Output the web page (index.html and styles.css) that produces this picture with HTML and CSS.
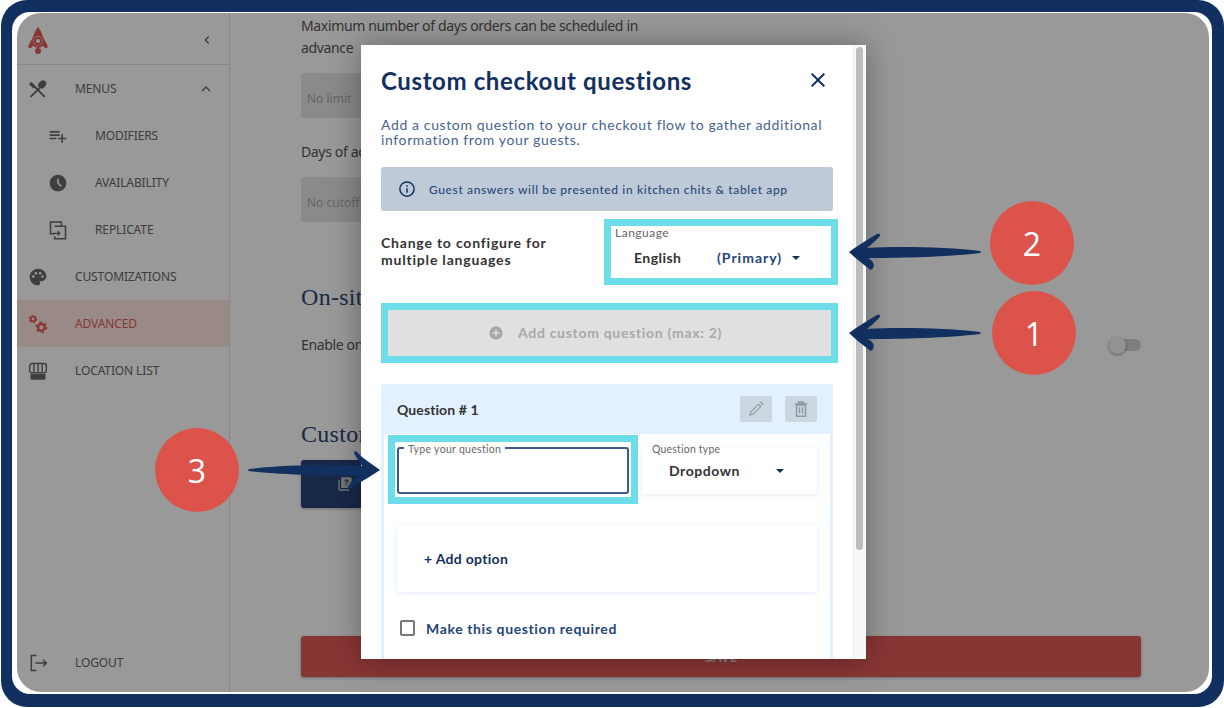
FILE: index.html
```html
<!DOCTYPE html>
<html lang="en">
<head>
<meta charset="utf-8">
<title>Custom checkout questions</title>
<link rel="stylesheet" href="styles.css">
</head>
<body>
<div class="frame">
  <div class="matte">
    <div class="screen">
      <aside class="sidebar">
        <div class="brand">
          <svg class="logo" viewBox="0 0 20 27"><path fill="#e35b58" fill-rule="evenodd" d="M10 0 C12.500 3 14 6.500 15 10 L19.500 18.500 C20.500 21 18 22 16.500 20.500 L14.800 18.800 A6.500 6.500 0 0 1 5.200 18.800 L3.500 20.500 C2 22 -.5 21 .5 18.500 L5 10 C6 6.500 7.500 3 10 0 Z M10 9.300 A4.700 4.700 0 1 0 10 18.700 A4.700 4.700 0 1 0 10 9.300 Z"/><path fill="#e35b58" fill-rule="evenodd" d="M10 9.800 A4.200 4.200 0 1 0 10 18.200 A4.200 4.200 0 1 0 10 9.800 Z M10 12 A2 2 0 1 1 10 16 A2 2 0 1 1 10 12 Z"/><circle cx="10" cy="24" r="3" fill="#e35b58"/></svg>
          <svg class="chev" viewBox="0 0 24 24"><path d="M15.410 7.410L14 6l-6 6 6 6 1.410-1.410L10.830 12z"/></svg>
        </div>
        <nav class="nav">
          <a class="row"><svg class="ico" viewBox="0 0 24 24"><path d="M3.500 4.500L20 21.500" stroke="#666" stroke-width="2.200" fill="none"/><path d="M2.500 3.500l6 6-2 2-5-5z"/><path d="M3 21.500L14 11" stroke="#666" stroke-width="2.200"/><ellipse cx="17" cy="6.500" rx="4.200" ry="5.400" transform="rotate(45 17 6.500)"/></svg><span>MENUS</span><svg class="up" viewBox="0 0 24 24"><path d="M12 8l-6 6 1.410 1.410L12 10.830l4.590 4.580L18 14z"/></svg></a>
          <a class="row sub"><svg class="ico" viewBox="0 0 24 24"><path d="M14 10H2v2h12v-2zm0-4H2v2h12V6zm4 8v-4h-2v4h-4v2h4v4h2v-4h4v-2h-4zM2 16h8v-2H2v2z"/></svg><span>MODIFIERS</span></a>
          <a class="row sub"><svg class="ico" viewBox="0 0 24 24"><path d="M11.990 2C6.470 2 2 6.480 2 12s4.470 10 9.990 10C17.520 22 22 17.520 22 12S17.520 2 11.990 2zm3.300 14.710L11 12.410V7h2v4.590l3.710 3.710-1.420 1.410z"/></svg><span>AVAILABILITY</span></a>
          <a class="row sub"><svg class="ico" viewBox="0 0 24 24"><path fill="none" stroke="#666" stroke-width="1.800" d="M8 16.500H3V2.500h13V7M8 7.500h13v15H8v-3"/><path fill="none" stroke="#666" stroke-width="1.600" d="M6 16h8M11.500 13.500l2.500 2.500-2.500 2.500"/></svg><span>REPLICATE</span></a>
          <a class="row"><svg class="ico" viewBox="0 0 24 24"><path d="M12 2C6.490 2 2 6.490 2 12s4.490 10 10 10c1.380 0 2.500-1.120 2.500-2.500 0-.61-.23-1.200-.64-1.670-.08-.1-.13-.21-.13-.33 0-.28.22-.5.5-.5H16c3.310 0 6-2.690 6-6 0-4.960-4.490-9-10-9zm5.500 11c-.83 0-1.500-.67-1.500-1.500s.67-1.500 1.500-1.500 1.500.67 1.500 1.500-.67 1.500-1.500 1.500zm-3-4c-.83 0-1.500-.67-1.500-1.500S13.670 6 14.500 6s1.500.67 1.500 1.500S15.330 9 14.500 9zM5 11.500c0-.83.67-1.500 1.500-1.500s1.500.67 1.500 1.500S7.330 13 6.500 13 5 12.330 5 11.500zm6-4c0 .83-.67 1.500-1.500 1.500S8 8.330 8 7.500 8.670 6 9.500 6s1.500.67 1.500 1.500z"/></svg><span>CUSTOMIZATIONS</span></a>
          <a class="row active"><svg class="ico" viewBox="0 0 24 24"><circle cx="6" cy="6" r="2.800" fill="none" stroke="#e35b58" stroke-width="2.200"/><circle cx="6" cy="6" r="4.200" fill="none" stroke="#e35b58" stroke-width="1.800" stroke-dasharray="2 2.400"/><circle cx="16" cy="16" r="4" fill="none" stroke="#e35b58" stroke-width="2.800"/><circle cx="16" cy="16" r="6" fill="none" stroke="#e35b58" stroke-width="2.400" stroke-dasharray="2.600 3.700"/></svg><span>ADVANCED</span></a>
          <a class="row"><svg class="ico" viewBox="0 0 24 24"><path d="M5 3h14a3 3 0 0 1 3 3v6a2 2 0 0 1-2 2H4a2 2 0 0 1-2-2V6a3 3 0 0 1 3-3z" fill="none" stroke="#666" stroke-width="1.700"/><path d="M7 4v9M12 4v9M17 4v9" stroke="#666" stroke-width="1.700"/><path d="M3 15.500h18V21a1.500 1.500 0 0 1-1.500 1.500h-15A1.500 1.500 0 0 1 3 21z"/></svg><span>LOCATION LIST</span></a>
          <a class="row logout"><svg class="ico" viewBox="0 0 24 24"><path fill="none" stroke="#666" stroke-width="1.800" d="M10 3H4v18h6M9 12h13M18 8l4 4-4 4"/></svg><span>LOGOUT</span></a>
        </nav>
      </aside>
      <main class="content">
        <p class="para">Maximum number of days orders can be scheduled in advance</p>
        <div class="field">No limit</div>
        <p class="label">Days of advance cutoff</p>
        <div class="field">No cutoff</div>
        <h2 class="heading onsite">On-site ordering</h2>
        <div class="toggle-row">
          <p class="label flat">Enable on-site ordering</p>
          <div class="switch"><span class="knob"></span></div>
        </div>
        <h2 class="heading custom">Custom checkout questions</h2>
        <div class="dark-btn"><svg viewBox="0 0 24 24"><path d="M4 6H2v14a2 2 0 0 0 2 2h14v-2H4V6zm16-4H8a2 2 0 0 0-2 2v12a2 2 0 0 0 2 2h12a2 2 0 0 0 2-2V4a2 2 0 0 0-2-2zm-5.500 12.500h-1.800v-1.800h1.800v1.800zm1.900-5c-.6.800-1.800 1.100-1.900 2.500h-1.800c0-2.300 2.200-2.400 2.200-4 0-.7-.6-1.200-1.300-1.200s-1.300.5-1.300 1.200H11c0-1.700 1.400-3 3.100-3s3.100 1.200 3.100 2.900c0 .6-.3 1.100-.8 1.600z"/></svg></div>
        <div class="save">SAVE</div>
      </main>
      <div class="scrim"></div>
      <section class="modal">
        <div class="modal-body">
          <header class="modal-head">
            <h1>Custom checkout questions</h1>
            <svg class="close" viewBox="0 0 24 24"><path d="M19 6.410L17.590 5 12 10.590 6.410 5 5 6.410 10.590 12 5 17.590 6.410 19 12 13.410 17.590 19 19 17.590 13.410 12z"/></svg>
          </header>
          <p class="intro">Add a custom question to your checkout flow to gather additional information from your guests.</p>
          <div class="banner">
            <svg viewBox="0 0 24 24"><circle cx="12" cy="12" r="9.500" fill="none" stroke="#12305f" stroke-width="2"/><path d="M11 11h2v6h-2zM11 7h2v2h-2z" fill="#12305f"/></svg>
            <span>Guest answers will be presented in kitchen chits &amp; tablet app</span>
          </div>
          <div class="lang-row">
            <p class="lang-copy">Change to configure for multiple languages</p>
            <div class="mark lang-mark">
              <div class="lang-label">Language</div>
              <div class="lang-value"><b>English</b><em>(Primary)</em><i class="caret"></i></div>
            </div>
          </div>
          <div class="mark add-mark">
            <div class="add-btn"><svg viewBox="0 0 24 24"><path d="M12 2a10 10 0 1 0 0 20 10 10 0 0 0 0-20zm5 11h-4v4h-2v-4H7v-2h4V7h2v4h4v2z"/></svg><span>Add custom question (max: 2)</span></div>
          </div>
          <article class="card">
            <div class="card-head">
              <span>Question # 1</span>
              <div class="tools">
                <span class="tool"><svg viewBox="0 0 24 24"><path fill="#8f9aa3" d="M3 21l1.200-5.200L15.500 4.500l4 4L8.200 19.800zM5.800 16.300l-.6 2.500 2.500-.6 9.600-9.700-2-2z"/><path d="M17 3l1.500-1.200 3.700 3.700L21 7z" fill="#8f9aa3"/></svg></span>
                <span class="tool"><svg viewBox="0 0 24 24"><path fill="none" stroke="#8f9aa3" stroke-width="2" d="M6 6.500h12V21.500H6zM4 5h16M9 5V2.500h6V5M10 9.500v8.500M14 9.500v8.500"/></svg></span>
              </div>
            </div>
            <div class="card-body">
              <div class="q-row">
                <div class="mark q-mark">
                  <div class="q-input"><span class="q-legend">Type your question</span></div>
                </div>
                <div class="q-type">
                  <span class="q-type-label">Question type</span>
                  <div class="q-type-value"><b>Dropdown</b><i class="caret"></i></div>
                </div>
              </div>
              <div class="options"><span>+ Add option</span></div>
              <label class="req"><span class="box"></span><span>Make this question required</span></label>
            </div>
          </article>
        </div>
        <div class="scroll-track"><span class="scroll-thumb"></span></div>
      </section>
    </div>
  </div>
</div>

<div class="note note-2">2</div>
<div class="note note-1">1</div>
<div class="note note-3">3</div>
<svg class="arrow arrow-2" viewBox="0 0 134 38"><path d="M1 19 C9 13 19 7 29 1 C32 0 33 2 31 4 C27 8 23 12 19 15 C50 13 100 14 132 18 C133 19 133 20 132 20 C100 24 50 25 20 25 C25 28 27 31 25 35 C24 37 22 37 20 35 C14 30 7 25 1 19Z"/></svg>
<svg class="arrow arrow-1" viewBox="0 0 134 38"><path d="M1 19 C9 13 19 7 29 1 C32 0 33 2 31 4 C27 8 23 12 19 15 C50 13 100 14 132 18 C133 19 133 20 132 20 C100 24 50 25 20 25 C25 28 27 31 25 35 C24 37 22 37 20 35 C14 30 7 25 1 19Z"/></svg>
<svg class="arrow arrow-3" viewBox="0 0 134 38"><path d="M133 19 C125 13 115 7 110 1 C108 -1 106 1 108 4 C110 8 113 11 115 15 C84 13 34 14 2 18 C1 19 1 20 2 20 C34 24 84 25 112 25 C106 28 103 32 101 36 C100 38 102 38 105 36 C114 31 124 25 133 19Z"/></svg>
</body>
</html>
```
FILE: styles.css
```css
* { box-sizing: border-box; }
html, body { margin: 0; height: 100%; background: #fff; overflow: hidden; }
body { position: relative; width: 1224px; height: 708px; }
p, h1, h2 { margin: 0; }

.frame { width: 1223px; height: 707px; margin-left: 1px; background: #12305f; border-radius: 26px; padding: 12px 12px 13px 11px; }
.matte { height: 100%; background: #fff; border-radius: 18px; padding: 1px 3px 2px 5px; }
.screen { position: relative; display: flex; height: 100%; background: #fff; border-radius: 24px; overflow: hidden; font-family: "Noto Sans", sans-serif; }
.scrim { position: absolute; inset: 0; background: rgba(0, 0, 0, .4); }

.sidebar { width: 213px; flex: none; display: flex; flex-direction: column; border-right: 1px solid #e2e2e2; }
.brand { height: 52px; flex: none; display: flex; align-items: center; justify-content: space-between; padding: 3px 14px 0 11px; border-bottom: 1px solid #e2e2e2; }
.logo { width: 20px; height: 27px; }
.chev { width: 16px; height: 16px; fill: #666; }
.nav { flex: 1; display: flex; flex-direction: column; padding-bottom: 6px; }
.row { height: 47px; flex: none; display: flex; align-items: center; padding-left: 11px; color: #666; font-size: 12px; line-height: 17px; letter-spacing: -.12px; }
.row .ico { width: 20px; height: 20px; fill: #6a6a6a; margin-right: 27px; flex: none; }
.row.sub { padding-left: 31px; }
.up { width: 18px; height: 18px; fill: #6a6a6a; margin-left: auto; margin-right: 14px; }
.row.active { background: #ffe6e3; color: #e35b58; }
.row.logout { margin-top: auto; }

.content { flex: 1; min-width: 0; padding: 2px 68px 0 71px; display: flex; flex-direction: column; color: #555; font-size: 14px; letter-spacing: -.35px; }
.para { width: 345px; line-height: 22px; height: 44px; flex: none; }
.field { height: 45px; flex: none; width: 300px; margin-top: 14px; padding-left: 6px; background: #e6e6e6; border-radius: 3px; color: #aaa; font-size: 12px; line-height: 51px; letter-spacing: 0; }
.label { margin-top: 23px; line-height: 22px; width: 300px; flex: none; white-space: nowrap; }
.label + .field { margin-top: 14px; }
.heading { font-family: "Liberation Serif", serif; font-weight: 400; font-size: 24px; line-height: 30px; letter-spacing: .3px; color: #2c4674; white-space: nowrap; flex: none; }
.onsite { margin-top: 60px; }
.toggle-row { display: flex; align-items: center; justify-content: space-between; margin-top: 22px; height: 22px; flex: none; }
.label.flat { margin: 0; }
.switch { position: relative; width: 32px; height: 12px; background: #d2d2d2; border-radius: 6px; display: flex; }
.knob { width: 17px; height: 17px; margin-top: -2px; border-radius: 50%; background: #f5f5f5; box-shadow: 0 1px 3px rgba(0, 0, 0, .4); }
.custom { margin-top: 63px; }
.dark-btn { width: 300px; height: 48px; margin-top: 11px; flex: none; background: #28447a; border-radius: 3px; display: flex; align-items: center; padding-left: 36px; box-shadow: 0 1px 3px rgba(0, 0, 0, .3); }
.dark-btn svg { width: 16px; height: 16px; fill: #c4c4c4; }
.save { height: 41px; margin-top: 128px; flex: none; background: #e35b58; border-radius: 3px; color: #ddd; font-weight: 600; font-size: 14px; line-height: 41px; text-align: center; box-shadow: 0 1px 3px rgba(0, 0, 0, .3); }

.modal { position: absolute; left: 344px; top: 32px; width: 505px; height: 614px; background: #fff; box-shadow: 0 0 30px rgba(0, 0, 0, .35); font-family: "Lato", sans-serif; color: #12305f; }
.modal-body { height: 100%; overflow: hidden; padding: 0 20px; }
.scroll-track { position: absolute; right: 0; top: 0; bottom: 0; width: 13px; background: #f8f8f8; border-left: 1px solid #ececec; }
.scroll-thumb { display: block; width: 7px; height: 503px; margin: 2px 0 0 2px; background: #bdbdbd; border-radius: 4px; }
.modal-head { display: flex; justify-content: space-between; align-items: center; height: 34px; margin-top: 18px; width: 452px; padding-top: 0; }
.modal-head h1 { font-size: 24px; font-weight: 700; letter-spacing: .62px; color: #12305f; }
.close { width: 24px; height: 24px; fill: #12305f; margin-right: 3px; }
.intro { margin-top: 20px; font-size: 14px; line-height: 15px; letter-spacing: .62px; color: #47638f; width: 450px; }
.banner { display: flex; align-items: center; height: 44px; margin-top: 20px; padding-left: 17px; background: #bfcad8; border-radius: 3px; font-size: 12px; letter-spacing: .62px; color: #29487a; font-weight: 500; width: 452px; }
.banner svg { width: 18px; height: 18px; margin-right: 13px; }
.lang-row { display: flex; justify-content: space-between; margin-top: 8px; width: 457px; }
.lang-copy { width: 190px; margin-top: 15px; font-size: 14px; font-weight: 700; line-height: 17px; letter-spacing: .8px; color: #333; }
.mark { border: 7px solid #6cdde9; background: #fff; }
.lang-mark { width: 234px; height: 66px; padding: 0 4px; }
.lang-label { font-size: 12px; line-height: 13px; color: #666; letter-spacing: .5px; margin-top: 0; }
.lang-value { display: flex; align-items: center; font-size: 14px; margin-top: 10px; padding-left: 19px; }
.lang-value b { width: 83px; font-weight: 700; letter-spacing: .45px; color: #333; }
.lang-value em { font-style: normal; font-weight: 700; letter-spacing: 1px; color: #24457c; }
.lang-value .caret { margin-left: 10px; }
.caret { display: block; width: 0; height: 0; border: 4px solid transparent; border-top: 4.500px solid #12305f; border-bottom: 0; }
.add-mark { margin-top: 18px; width: 457px; height: 60px; }
.add-btn { height: 100%; padding: 0 9px 1px 0; background: #e0e0e0; display: flex; align-items: center; justify-content: center; gap: 14px; font-size: 14px; font-weight: 700; letter-spacing: .7px; color: #a8a8a8; }
.add-btn svg { width: 16px; height: 16px; fill: #a8a8a8; }
.card { width: 452px; margin-top: 21px; background: #e3f0fd; border-radius: 3px 3px 0 0; padding: 0 3px 3px; height: 332px; }
.card-head { height: 50px; display: flex; align-items: center; justify-content: space-between; padding: 0 13px; font-size: 14px; font-weight: 700; letter-spacing: .1px; color: #333; }
.tools { display: flex; gap: 13px; margin-right: 0; }
.tool { width: 32px; height: 26px; background: #cad6e0; border-radius: 2px; display: flex; align-items: center; justify-content: center; }
.tool svg { width: 18px; height: 18px; }
.card-body { height: 279px; background: #fff; padding: 1px 13px 0 4px; }
.q-row { display: flex; gap: 4px; }
.q-mark { width: 250px; height: 69px; padding: 5px 2px; flex: none; }
.q-input { position: relative; height: 47px; margin-top: 0; border: 2px solid #3d5a8c; border-radius: 3px; }
.q-legend { position: absolute; left: 5px; top: -6px; padding: 0 4px; background: #fff; font-size: 10.500px; line-height: 13px; letter-spacing: .3px; color: #666; white-space: nowrap; }
.q-type { position: relative; width: 175px; height: 47px; margin-top: 12px; background: #fff; box-shadow: 0 1px 5px rgba(200, 215, 235, .5); }
.q-type-label { position: absolute; left: 10px; top: -4px; font-size: 10.500px; line-height: 13px; letter-spacing: .2px; color: #666; }
.q-type-value { display: flex; align-items: center; justify-content: space-between; height: 100%; padding: 0 33px 0 27px; font-size: 14px; letter-spacing: .55px; }
.q-type-value b { color: #333; }
.options { margin: 21px 0 0 9px; width: 420px; height: 67px; display: flex; align-items: center; padding-left: 27px; box-shadow: 0 1px 5px rgba(200, 215, 235, .5); font-size: 14px; font-weight: 700; letter-spacing: .3px; color: #12305f; }
.req { display: flex; align-items: center; margin: 27px 0 0 12px; height: 18px; font-size: 14px; font-weight: 700; letter-spacing: .62px; color: #24457c; }
.box { width: 15px; height: 16px; border: 2px solid #777; border-radius: 2px; margin-right: 11px; }

.note { position: absolute; width: 84px; height: 84px; border-radius: 50%; background: #dc534b; color: #fff; font-family: "Open Sans", sans-serif; font-size: 32px; display: flex; align-items: center; justify-content: center; }
.note-1 { left: 992px; top: 291px; }
.note-2 { left: 990px; top: 201px; }
.note-3 { left: 155px; top: 428px; }
.arrow { position: absolute; width: 134px; height: 38px; fill: #12305f; }
.arrow-1 { left: 848px; top: 314px; }
.arrow-2 { left: 848px; top: 233px; }
.arrow-3 { left: 247px; top: 451px; }
```
